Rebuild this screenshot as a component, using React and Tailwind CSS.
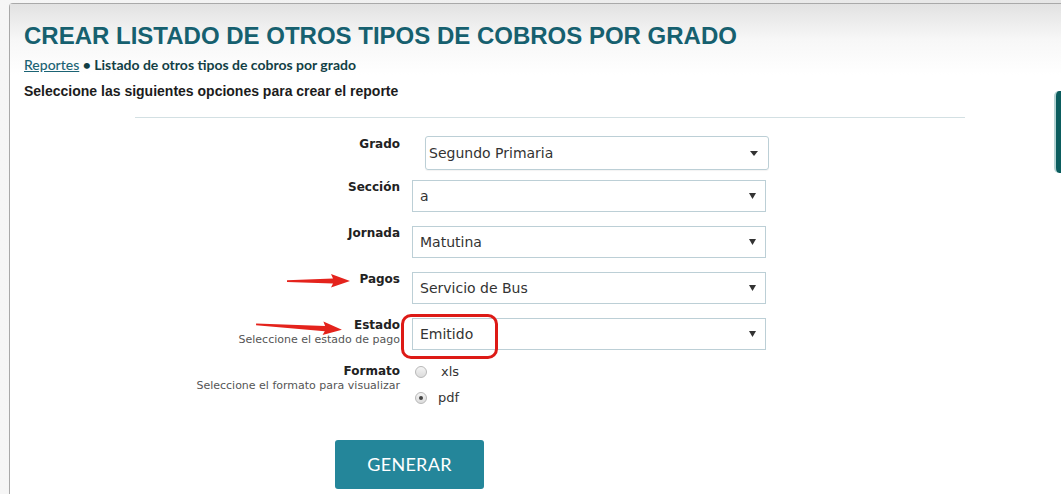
import React from "react";

const rows = [
  { label: "Sección", value: "a" },
  { label: "Jornada", value: "Matutina" },
  { label: "Pagos", value: "Servicio de Bus" },
  { label: "Estado", value: "Emitido", hint: "Seleccione el estado de pago" },
];

function Caret() {
  return (
    <svg width="7" height="6" viewBox="0 0 7 6" className="shrink-0">
      <path d="M0 0 L7 0 L3.5 6 Z" fill="#333" />
    </svg>
  );
}

function RedArrow({ width, tilt }) {
  // shaft tapering into a head, tip at the right
  const h = 16;
  const mid = h / 2;
  return (
    <svg width={width} height={h + Math.abs(tilt)} viewBox={`0 0 ${width} ${h + Math.abs(tilt)}`}>
      <g transform={`rotate(${tilt * 0.6} ${width / 2} ${mid})`}>
        <path
          d={`M0 ${mid - 0.8} L${width - 17} ${mid - 2.6} L${width - 19} ${mid - 7} L${width} ${mid} L${width - 19} ${mid + 6.5} L${width - 17} ${mid + 2.6} L0 ${mid + 1} Z`}
          fill="#e4231c"
        />
      </g>
    </svg>
  );
}

function Radio({ checked, label }) {
  return (
    <div className="flex items-center h-[26px]">
      <span className="w-[12px] h-[12px] rounded-full border border-[#b8b8b8] bg-gradient-to-b from-[#f4f4f4] to-[#dcdcdc] flex items-center justify-center">
        {checked && <span className="w-[4px] h-[4px] rounded-full bg-[#444]" />}
      </span>
      <span className={`text-[13px] text-[#333] ${checked ? "ml-[11px]" : "ml-[14px]"}`}>{label}</span>
    </div>
  );
}

export default function App() {
  return (
    <div className="w-[1061px] h-[494px] overflow-hidden bg-gradient-to-r from-[#f6f6f6] to-[#e6e6e6] pt-[3px] pl-[9px] relative font-['DejaVu_Sans',sans-serif]">
      <div className="h-[600px] border-l border-t border-[#a9a9a9] rounded-tl-[4px] bg-white relative">
        {/* header */}
        <div className="bg-gradient-to-b from-[#e2e2e2] via-[#f7f7f7] to-white pt-[18px] pl-[14px] pb-[2px]">
          <h1 className="font-['Liberation_Sans',Arial,sans-serif] font-bold text-[24px] leading-[28px] text-[#16606f]">
            CREAR LISTADO DE OTROS TIPOS DE COBROS POR GRADO
          </h1>
          <div className="mt-[7px] font-['Lato',sans-serif] text-[14px] leading-[16px] font-bold text-[#123f45]">
            <span className="underline font-medium text-[#1b6374]">Reportes</span> • Listado de otros tipos de cobros por grado
          </div>
        </div>
        <p className="pl-[14px] mt-[8px] font-['Liberation_Sans',Arial,sans-serif] font-bold text-[14px] leading-[16px] text-[#1c1c1c]">
          Seleccione las siguientes opciones para crear el reporte
        </p>

        <div className="ml-[125px] w-[830px] mt-[18px] border-t border-[#d3e0e3]" />

        {/* form */}
        <div className="ml-[125px] mt-[18px] flex flex-col">
          <div className="flex h-[34px] mb-[10px]">
            <div className="w-[265px] text-right font-bold text-[12px] leading-[14px] text-[#222] pt-[1px]">Grado</div>
            <div className="ml-[25px] w-[344px] h-[34px] border border-[#bccfd6] rounded-[3px] flex items-center pl-[3px] pr-[10px] shadow-[0_1px_1px_rgba(0,0,0,0.05)]">
              <span className="flex-1 text-[14px] text-[#333]">Segundo Primaria</span>
              <svg width="8" height="5" viewBox="0 0 8 5"><path d="M0 0 L8 0 L4 5 Z" fill="#333" /></svg>
            </div>
          </div>

          {rows.map((r) => (
            <div key={r.label} className="flex h-[32px] mb-[14px] relative">
              <div className="w-[265px] text-right">
                <div className="font-bold text-[12px] leading-[14px] text-[#222]">{r.label}</div>
                {r.hint && <div className="text-[11px] leading-[16px] text-[#555]">{r.hint}</div>}
              </div>
              <div className="ml-[12px] w-[354px] h-[32px] border border-[#bccfd6] flex items-center pl-[7px] pr-[9px]">
                <span className="flex-1 text-[14px] text-[#333]">{r.value}</span>
                <Caret />
              </div>
              {r.label === "Pagos" && (
                <div className="absolute left-[152px] top-[1px]">
                  <RedArrow width={63} tilt={0} />
                </div>
              )}
              {r.label === "Estado" && (
                <>
                  <div className="absolute left-[121px] top-[1px]">
                    <RedArrow width={86} tilt={6} />
                  </div>
                  <div className="absolute left-[266px] top-[-4px] w-[97px] h-[45px] border-[3px] border-[#dd1a16] rounded-[10px]" />
                </>
              )}
            </div>
          ))}

          <div className="flex">
            <div className="w-[265px] text-right">
              <div className="font-bold text-[12px] leading-[14px] text-[#222]">Formato</div>
              <div className="text-[11px] leading-[16px] text-[#555]">Seleccione el formato para visualizar</div>
            </div>
            <div className="ml-[15px] -mt-[5px] flex flex-col">
              <Radio label="xls" />
              <Radio checked label="pdf" />
            </div>
          </div>

          <button className="ml-[200px] mt-[29px] w-[149px] h-[49px] rounded-[3px] bg-[#24869a] text-white font-['Lato',sans-serif] text-[18px] tracking-[0.3px]">
            GENERAR
          </button>
        </div>

        {/* side tab */}
        <div className="absolute right-0 top-[87px] w-[7px] h-[82px] rounded-l-[5px] bg-[#0b5d5e] border-l-2 border-[#b5d3d3]" />
      </div>
    </div>
  );
}
